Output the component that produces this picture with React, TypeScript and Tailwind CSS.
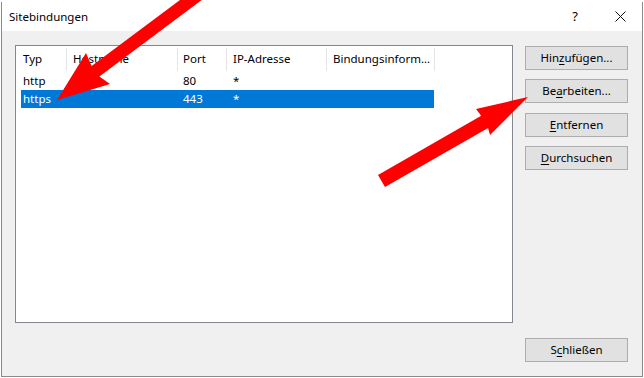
const ui = "font-['Noto_Sans',sans-serif] text-[11.5px] leading-none text-black";

type Row = { typ: string; host: string; port: string; ip: string; info: string; selected?: boolean };

const rows: Row[] = [
  { typ: "http", host: "", port: "80", ip: "*", info: "" },
  { typ: "https", host: "", port: "443", ip: "*", info: "", selected: true },
];

function Btn({ pre, hot, post }: { pre: string; hot: string; post: string }) {
  return (
    <div className="w-[103px] h-[24px] shrink-0 border border-[#adadad] bg-[#e1e1e1] flex items-center justify-center">
      <span>
        {pre}
        <span className="underline underline-offset-[2px]">{hot}</span>
        {post}
      </span>
    </div>
  );
}

function HeaderCell({ w, pl, label }: { w: string; pl: string; label: string }) {
  return (
    <div className={`${w} ${pl} h-full flex items-center justify-between shrink-0`}>
      <span className="whitespace-nowrap">{label}</span>
      <span className="w-px h-[23px] bg-[#e5e5e5]" />
    </div>
  );
}

function Arrows() {
  return (
    <svg className="absolute inset-0 pointer-events-none" width="644" height="378" viewBox="0 0 644 378">
      {/* arrow pointing at the https row */}
      <polygon
        fill="#ff0000"
        points="259.8,-43.4 99.4,76.5 110,84 57,100 86,53 91.6,66 252,-53.8"
      />
      {/* arrow pointing at Bearbeiten */}
      <polygon
        fill="#ff0000"
        points="378,175 481.2,115.8 476,109 528,97 490,135 488.1,127.9 385,187"
      />
    </svg>
  );
}

export default function App() {
  return (
    <div className={`relative w-[644px] h-[378px] bg-white overflow-hidden ${ui}`}>
      <div className="h-[2px] bg-white" />
      <div className="ml-[1px] w-[642px] h-[375px] border-x border-b border-[#8a8a8a] flex flex-col">
        {/* title bar */}
        <div className="h-[29px] bg-white flex items-center pl-[7px] pr-[16px]">
          <span>Sitebindungen</span>
          <span className="ml-auto text-[13px]">?</span>
          <svg className="ml-[37px]" width="11" height="11" viewBox="0 0 11 11">
            <path d="M0.5 0.5 L10.5 10.5 M10.5 0.5 L0.5 10.5" stroke="#111" strokeWidth="1" />
          </svg>
        </div>

        {/* client area */}
        <div className="flex-1 bg-[#f0f0f0] flex pl-[13px] pt-[14px] pb-[14px]">
          <div className="w-[498px] h-[278px] border border-[#828790] bg-white flex flex-col">
            <div className="h-[26px] flex">
              <HeaderCell w="w-[51px]" pl="pl-[7px]" label="Typ" />
              <HeaderCell w="w-[111px]" pl="pl-[6px]" label="Hostname" />
              <HeaderCell w="w-[49px]" pl="pl-[5px]" label="Port" />
              <HeaderCell w="w-[100px]" pl="pl-[6px]" label="IP-Adresse" />
              <HeaderCell w="w-[108px]" pl="pl-[6px]" label="Bindungsinform..." />
            </div>
            {rows.map((r) => (
              <div key={r.typ} className="h-[18px] flex pl-[5px]">
                <div
                  className={`w-[413px] h-full flex items-center ${
                    r.selected ? "bg-[#0078d7] text-white" : ""
                  }`}
                >
                  <span className="w-[46px] pl-[2px] shrink-0">{r.typ}</span>
                  <span className="w-[110px] pl-[6px] shrink-0">{r.host}</span>
                  <span className="w-[49px] pl-[6px] shrink-0">{r.port}</span>
                  <span className="w-[100px] pl-[7px] shrink-0">{r.ip}</span>
                  <span className="w-[108px] pl-[7px] shrink-0">{r.info}</span>
                </div>
              </div>
            ))}
          </div>

          <div className="ml-[12px] flex flex-col">
            <div className="mt-[1px]">
              <Btn pre="Hin" hot="z" post="ufügen..." />
            </div>
            <div className="mt-[9px]">
              <Btn pre="Be" hot="a" post="rbeiten..." />
            </div>
            <div className="mt-[10px]">
              <Btn pre="" hot="E" post="ntfernen" />
            </div>
            <div className="mt-[9px]">
              <Btn pre="" hot="D" post="urchsuchen" />
            </div>
            <div className="mt-auto">
              <Btn pre="S" hot="c" post="hließen" />
            </div>
          </div>
        </div>
      </div>
      <Arrows />
    </div>
  );
}
